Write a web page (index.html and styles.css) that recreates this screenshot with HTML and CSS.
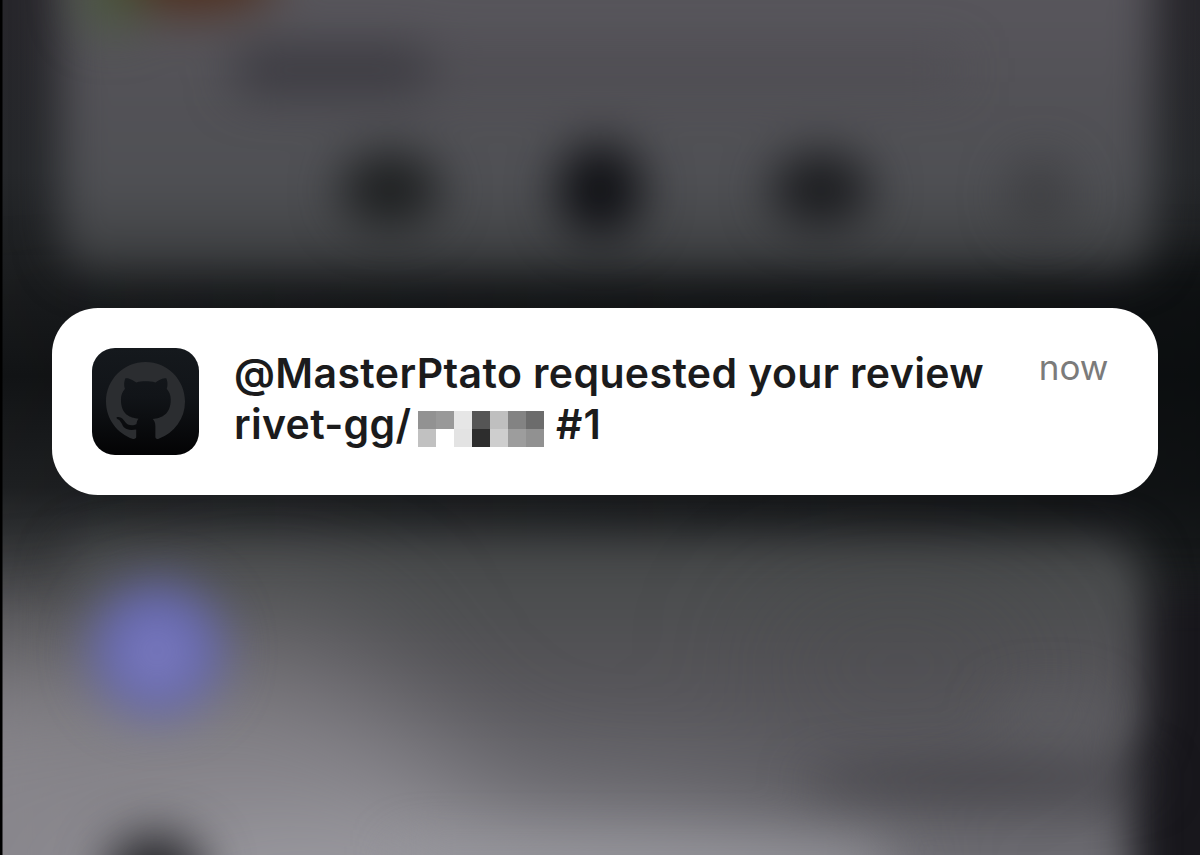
FILE: index.html
```html
<!DOCTYPE html>
<html lang="en">
<head>
<meta charset="utf-8">
<title>Notification</title>
<link rel="stylesheet" href="styles.css">
</head>
<body>
<main class="screen">
  <svg class="backdrop" viewBox="0 0 1200 855" preserveAspectRatio="none" color-interpolation-filters="sRGB" aria-hidden="true">
    <defs>
      <filter id="soft" filterUnits="userSpaceOnUse" x="-100" y="-200" width="1400" height="1200"><feGaussianBlur stdDeviation="24"/></filter>
      <filter id="edge" filterUnits="userSpaceOnUse" x="-100" y="-250" width="1500" height="1350"><feGaussianBlur stdDeviation="22"/></filter>
      <filter id="wide" filterUnits="userSpaceOnUse" x="-500" y="200" width="2200" height="1100"><feGaussianBlur stdDeviation="62"/></filter>
      <linearGradient id="base" x1="0" y1="0" x2="0" y2="1">
        <stop offset="0" stop-color="#27262b"/><stop offset=".2" stop-color="#25272a"/><stop offset=".33" stop-color="#1b1d1f"/>
        <stop offset=".44" stop-color="#121416"/><stop offset=".57" stop-color="#1f2123"/>
        <stop offset=".63" stop-color="#323436"/><stop offset=".72" stop-color="#545457"/><stop offset=".82" stop-color="#656468"/><stop offset="1" stop-color="#757479"/>
      </linearGradient>
      <linearGradient id="right" x1="0" y1="0" x2="1" y2="0">
        <stop offset="0" stop-color="#0a0c0e" stop-opacity="0"/><stop offset=".3" stop-color="#0a0c0e" stop-opacity=".3"/><stop offset="1" stop-color="#0a0c0e" stop-opacity=".85"/>
      </linearGradient>
      <linearGradient id="top" gradientUnits="userSpaceOnUse" x1="0" y1="0" x2="0" y2="290">
        <stop offset="0" stop-color="#58565c"/><stop offset=".3" stop-color="#535257"/><stop offset=".65" stop-color="#4f5054"/><stop offset="1" stop-color="#37393a"/>
      </linearGradient>
      <linearGradient id="lower" gradientUnits="userSpaceOnUse" x1="0" y1="530" x2="0" y2="855">
        <stop offset="0" stop-color="#444647"/><stop offset=".18" stop-color="#4b4d4e"/><stop offset=".4" stop-color="#545357"/><stop offset=".65" stop-color="#5d5c61"/><stop offset=".82" stop-color="#5b5a5f"/><stop offset="1" stop-color="#6e6d73"/>
      </linearGradient>
    </defs>
    <rect width="1200" height="855" fill="url(#base)"/>
    <rect x="-100" y="255" width="1500" height="800" fill="url(#right)" filter="url(#edge)"/>
    <rect x="1120" y="590" width="200" height="460" fill="#18171c" filter="url(#edge)"/>
    <g filter="url(#edge)">
      <rect x="60" y="-120" width="1094" height="392" rx="36" fill="url(#top)"/>
      <rect x="62" y="537" width="1084" height="227" rx="44" fill="url(#lower)"/>
      <rect x="62" y="755" width="1070" height="220" rx="20" fill="url(#lower)"/>
    </g>
    <g filter="url(#wide)">
      <ellipse cx="100" cy="840" rx="390" ry="185" fill="#8e8c92" opacity=".83"/>
      <ellipse cx="480" cy="920" rx="410" ry="110" fill="#a09fa5" opacity=".85"/>
      <ellipse cx="270" cy="660" rx="120" ry="65" fill="#77767a" opacity=".4"/>
      <ellipse cx="900" cy="665" rx="150" ry="80" fill="#454549" opacity=".3"/>
    </g>
    <g filter="url(#soft)">
      <ellipse cx="980" cy="780" rx="180" ry="17" fill="#3d3c41" opacity=".7"/>
      <ellipse cx="1050" cy="712" rx="60" ry="22" fill="#605f64" opacity=".5"/>
      <rect x="400" y="846" width="480" height="60" fill="#97969c" opacity=".65"/>
      <circle cx="157" cy="650" r="66" fill="#6568b3"/>
      <circle cx="157" cy="656" r="30" fill="#8482c0" opacity=".8"/>
      <ellipse cx="155" cy="876" rx="50" ry="43" fill="#252529"/>
      <ellipse cx="190" cy="-22" rx="88" ry="36" fill="#50301f"/>
      <ellipse cx="112" cy="-5" rx="34" ry="38" fill="#465738" opacity=".8"/>
      <rect x="235" y="46" width="195" height="48" rx="16" fill="#37363c" opacity=".86"/>
      <rect x="430" y="52" width="530" height="36" fill="#49484d" opacity=".5"/>
      <ellipse cx="390" cy="190" rx="50" ry="38" fill="#1d1f20"/>
      <ellipse cx="600" cy="190" rx="43" ry="47" fill="#0f1014"/>
      <ellipse cx="821" cy="190" rx="50" ry="38" fill="#1b1c1f"/>
      <ellipse cx="1040" cy="195" rx="32" ry="38" fill="#38383b" opacity=".65"/>
    </g>
    <rect width="2.5" height="855" fill="#000"/>
  </svg>

  <article class="notification">
    <div class="app-icon">
      <svg class="mark" viewBox="0 0 16 16" role="img" aria-label="GitHub">
        <path d="M8 0C3.58 0 0 3.58 0 8c0 3.54 2.29 6.53 5.47 7.59.4.07.65-.17.65-.38v-1.55c-2.01.37-2.63-.43-2.79-.88-.09-.23-.48-.94-.82-1.13-.28-.15-.68-.52-.01-.53.63-.01 1.08.58 1.23.82.72 1.21 1.97.87 2.43.66.07-.52.2-.93.43-1.13-1.78-.2-3.56-.83-3.56-3.89 0-.87.31-1.59.82-2.15-.08-.2-.36-1.02.08-2.12 0 0 .67-.21 2.2.82.64-.18 1.2-.22 1.88-.22s1.36.04 2 .22c1.53-1.04 2.2-.82 2.2-.82.44 1.1.16 1.92.08 2.12.51.56.82 1.27.82 2.15 0 3.07-1.87 3.75-3.65 3.95.29.25.54.73.54 1.48v2.2c0 .21.15.46.55.38A8.01 8.01 0 0 0 16 8c0-4.42-3.58-8-8-8z"/>
      </svg>
    </div>
    <div class="message">
      <div class="line title">@MasterPtato requested your review</div>
      <div class="line repo">
        <span class="owner">rivet-gg/</span>
        <svg class="redacted" viewBox="0 0 7 2" shape-rendering="crispEdges" aria-hidden="true">
          <path fill="#929292" d="M0 0h1v1H0z"/><path fill="#999" d="M1 0h1v1H1z"/><path fill="#e6e6e6" d="M2 0h1v1H2z"/><path fill="#555" d="M3 0h1v1H3z"/><path fill="#bfbfbf" d="M4 0h1v1H4z"/><path fill="#838383" d="M5 0h1v1H5z"/><path fill="#6c6c6c" d="M6 0h1v1H6z"/>
          <path fill="#c1c1c1" d="M0 1h1v1H0z"/><path fill="#fff" d="M1 1h1v1H1z"/><path fill="#e3e3e3" d="M2 1h1v1H2z"/><path fill="#2d2d2d" d="M3 1h1v1H3z"/><path fill="#cecece" d="M4 1h1v1H4z"/><path fill="#9d9d9d" d="M5 1h1v1H5z"/><path fill="#919191" d="M6 1h1v1H6z"/>
        </svg>
        <span class="number">#1</span>
      </div>
    </div>
    <time class="time">now</time>
  </article>
</main>
</body>
</html>
```
FILE: styles.css
```css
* { box-sizing: border-box; }
body {
  margin: 0;
  background: #0a0c0e;
  font-family: Inter, "Liberation Sans", sans-serif;
}
.screen {
  position: relative;
  width: 1200px;
  height: 855px;
  overflow: hidden;
  padding: 307.5px 42.5px 0 52px;
}
.backdrop {
  position: absolute;
  inset: 0;
  width: 100%;
  height: 100%;
}
.notification {
  position: relative;
  display: flex;
  align-items: flex-start;
  height: 187px;
  padding: 38px 49px 0 40px;
  border-radius: 46px;
  background: #fff;
}
.app-icon {
  display: grid;
  place-items: center;
  flex: none;
  width: 107px;
  height: 107px;
  margin-top: 2px;
  border-radius: 23px;
  background: linear-gradient(#15191d, #111418 45%, #030304);
}
.mark {
  width: 79px;
  height: 79px;
  fill: #2b2d30;
}
.message {
  flex: 1;
  margin: 2px 0 0 35px;
  color: #1b1b1c;
  font-size: 41px;
  font-weight: 600;
}
.line {
  height: 51px;
  line-height: 51px;
  white-space: nowrap;
}
.title { letter-spacing: 0.38px; }
.repo {
  display: flex;
}
.owner {
  width: 184px;
  letter-spacing: 0.3px;
}
.redacted {
  flex: none;
  width: 126px;
  height: 36px;
  margin-top: 12.5px;
}
.number {
  margin-left: 12px;
  letter-spacing: 1px;
}
.time {
  color: #7b7b7b;
  font-size: 35px;
  line-height: 42px;
}
```
